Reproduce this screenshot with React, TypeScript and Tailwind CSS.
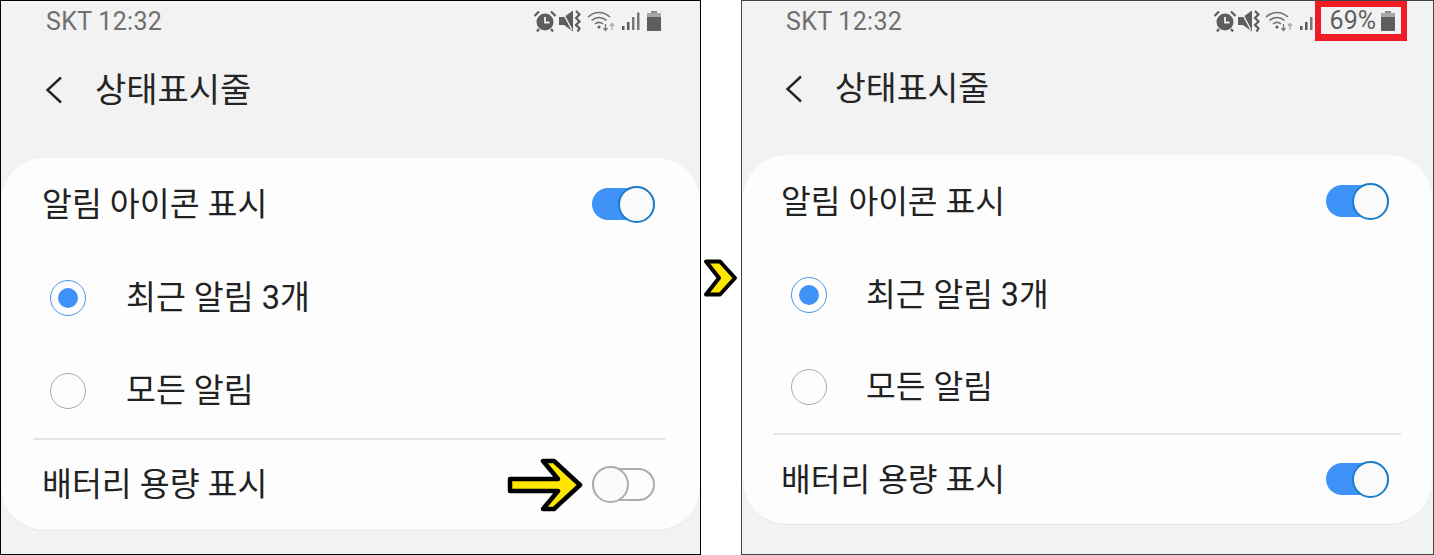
import React from "react";

const FONT = "[font-family:Roboto,'Noto_Sans_CJK_KR',sans-serif]";

function Alarm() {
  return (
    <svg width="24" height="22" viewBox="0 0 24 22" className="shrink-0">
      <circle cx="12" cy="12" r="8.500" fill="#5d5d5d" />
      <path d="M12 7v5.500h4.500" fill="none" stroke="#f2f2f2" strokeWidth="1.800" />
      <path d="M1.500 6 6 1.500M22.500 6 18 1.500M6 19l-2 2.500M18 19l2 2.500" stroke="#5d5d5d" strokeWidth="2.200" fill="none" />
    </svg>
  );
}
function Mute() {
  return (
    <svg width="22" height="22" viewBox="0 0 22 22" className="shrink-0">
      <path d="M0 7h5l9-6.500v21L5 15H0z" fill="#5d5d5d" />
      <path d="M3 1l10 19" stroke="#f2f2f2" strokeWidth="1.400" />
      <path d="M17 1l3.500 3.500-3.500 3.500 3.500 3.500-3.500 3.500 3.500 3.500-2 3" fill="none" stroke="#5d5d5d" strokeWidth="2.200" />
    </svg>
  );
}
function Wifi() {
  return (
    <svg width="29" height="22" viewBox="0 0 29 22" className="shrink-0">
      <path d="M1 7c6.500-6 15.500-6 22 0M4.500 10.500c4.500-4 10.500-4 15 0M8 14c2.500-2 5.500-2 8 0" fill="none" stroke="#707070" strokeWidth="1.600" />
      <circle cx="12" cy="17" r="1.600" fill="#606060" />
      <path d="M18.500 14v6M16.500 18l2 2.500 2-2.500" fill="none" stroke="#777" strokeWidth="1.300" />
      <path d="M25 20v-6M23 16l2-2.500 2 2.500" fill="none" stroke="#aaa" strokeWidth="1.300" />
    </svg>
  );
}
function Signal({ width }: { width: number }) {
  return (
    <svg width={width} height="22" viewBox={`0 0 ${width} 22`} className="shrink-0">
      <path d="M1 16h2.500v4H1zM6 12h2.500v8H6z" fill="#5d5d5d" />
      <path d="M11 7h2.500v13H11zM16 2.500h2.500V20H16z" fill="#777" />
    </svg>
  );
}
function Battery() {
  return (
    <svg width="16" height="22" viewBox="0 0 16 22" className="shrink-0">
      <path d="M5 1h6v2H5z" fill="#8a8a8a" />
      <path d="M1 3h14v4H1z" fill="#a8a8a8" />
      <path d="M1 7h14v14H1z" fill="#5f5f5f" />
    </svg>
  );
}
function Back() {
  return (
    <svg width="20" height="28" viewBox="0 0 20 28" className="shrink-0">
      <path d="M17 1.500 3.500 14 17 26.500" fill="none" stroke="#252525" strokeWidth="2.400" />
    </svg>
  );
}

function Toggle({ on }: { on: boolean }) {
  return (
    <div className="relative -mt-[4px] h-[33px] w-[63px] shrink-0">
      <div
        className={
          on
            ? "absolute left-0 right-0 top-[1px] h-[32px] rounded-full bg-[#3f92f7]"
            : "absolute left-0 right-0 top-[1px] h-[33px] rounded-full border-2 border-[#acacac]"
        }
      />
      <div
        className={
          on
            ? "absolute right-0 top-0 h-[37px] w-[37px] -translate-y-[1px] rounded-full border-2 border-[#1c7ec9] bg-[#fafafa]"
            : "absolute left-0 top-0 h-[37px] w-[37px] -translate-y-[1px] rounded-full border-2 border-[#acacac] bg-[#fbfbfb]"
        }
      />
    </div>
  );
}

function Radio({ on }: { on: boolean }) {
  return (
    <div
      className={
        on
          ? "flex h-[36px] w-[36px] shrink-0 items-center justify-center rounded-full border border-[#4a96ea]"
          : "h-[36px] w-[36px] shrink-0 rounded-full border border-[#a9a9a9]"
      }
    >
      {on && <div className="h-[20px] w-[20px] rounded-full bg-[#3f92f7]" />}
    </div>
  );
}

function Panel({ right }: { right: boolean }) {
  const label = right ? "text-[32.300px] leading-none text-[#222]" : "text-[32.500px] leading-none text-[#222]";
  const radioLabel = right
    ? "ml-[39px] text-[32.300px] leading-none text-[#222]"
    : "ml-[40px] text-[32.500px] leading-none text-[#222]";
  return (
    <div
      className={
        right
          ? "flex h-[555px] w-[693px] shrink-0 flex-col border border-[#444] bg-[#f2f2f2]"
          : "flex h-[555px] w-[701px] shrink-0 flex-col border border-black bg-[#f2f2f2]"
      }
    >
      <div className={right ? "flex h-[40px] items-center pl-[44px] pr-[26px]" : "flex h-[40px] items-center pl-[45px] pr-[38px]"}>
        <span className="text-[25px] leading-none tracking-[0.3px] text-[#6f6f6f]">SKT 12:32</span>
        <div className="ml-auto flex items-center">
          <Alarm />
          <span className={right ? "ml-[1px]" : "ml-[2px]"}>
            <Mute />
          </span>
          <span className={right ? "ml-[5px]" : "ml-[6px]"}>
            <Wifi />
          </span>
          {right ? (
            <>
              <span className="ml-[5px] mr-[2px]">
                <Signal width={14} />
              </span>
              <span className="flex h-[40px] items-center border-x-[6px] border-b-[7px] border-t-[6px] border-[#ee1c25] pl-[9px] pr-[5px]">
                <span className="text-[25px] leading-none text-[#5f5f5f]">69%</span>
                <span className="ml-[4px]">
                  <Battery />
                </span>
              </span>
            </>
          ) : (
            <>
              <span className="ml-[5px]">
                <Signal width={19} />
              </span>
              <span className="ml-[6px]">
                <Battery />
              </span>
            </>
          )}
        </div>
      </div>
      <div className={right ? "flex h-[96px] items-center pl-[42px]" : "flex h-[98px] items-center pl-[43px]"}>
        <Back />
        <span className={right ? "ml-[31px] text-[33.500px] leading-none text-[#252525]" : "ml-[31px] text-[34px] leading-none text-[#252525]"}>상태표시줄</span>
      </div>
      <div
        className={
          right
            ? "mx-[1px] mt-[18px] flex h-[370px] flex-col rounded-[44px] border-b border-[#e6e6e6] bg-[#fdfdfd] pl-[38px] pr-[43px]"
            : "mt-[19px] flex h-[373px] flex-col rounded-[44px] border-b border-[#e6e6e6] bg-[#fdfdfd] pl-[41px] pr-[45px]"
        }
      >
        <div className="flex h-[94px] items-center justify-between">
          <span className={label}>알림 아이콘 표시</span>
          <Toggle on />
        </div>
        <div className={right ? "flex h-[92px] items-center pl-[10px]" : "flex h-[92px] items-center pl-[8px]"}>
          <Radio on />
          <span className={radioLabel}>최근 알림 3개</span>
        </div>
        <div className={right ? "flex h-[92px] items-center pl-[10px]" : "flex h-[94px] items-center pl-[8px]"}>
          <Radio on={false} />
          <span className={radioLabel}>모든 알림</span>
        </div>
        <div className={right ? "-ml-[7px] -mr-[12px] h-[2px] shrink-0 bg-[#e4e4e4]" : "-ml-[9px] -mr-[10px] h-[2px] shrink-0 bg-[#e4e4e4]"} />
        <div className={right ? "flex flex-1 items-center justify-between pt-[2px]" : "flex flex-1 items-center justify-between"}>
          <span className={label}>배터리 용량 표시</span>
          <Toggle on={right} />
        </div>
      </div>
    </div>
  );
}

export default function App() {
  return (
    <div className={`relative flex h-[555px] w-[1434px] overflow-hidden bg-white ${FONT}`}>
      <Panel right={false} />
      <div className="flex w-[40px] shrink-0 items-start justify-center pt-[259px]">
        <svg width="36" height="38" viewBox="0 0 36 38">
          <path d="M3 2.500h14l15 16.500-15 16.500H3l13-16.500z" fill="#ffe600" stroke="#000" strokeWidth="4" strokeLinejoin="round" />
        </svg>
      </div>
      <Panel right />
      <svg width="78" height="58" viewBox="0 0 78 58" className="absolute left-[506px] top-[456px]">
        <path d="M4 23H52L37 5H48L74 29 48 53H37L52 35H4Z" fill="#ffe600" stroke="#000" strokeWidth="4.500" strokeLinejoin="round" />
      </svg>
    </div>
  );
}
